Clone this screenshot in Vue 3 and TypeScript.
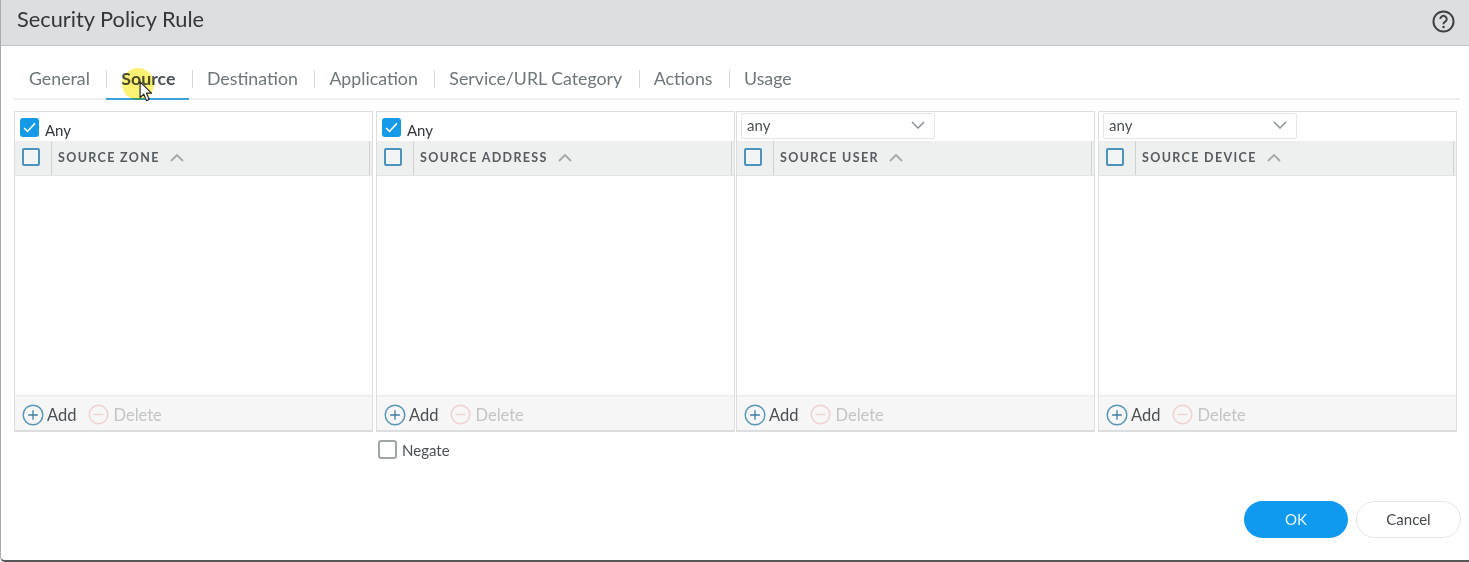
<script setup lang="ts">
interface Panel {
  title: string
  mode: 'check' | 'select'
}
const tabs: string[] = ['General', 'Source', 'Destination', 'Application', 'Service/URL Category', 'Actions', 'Usage']
const panels: Panel[] = [
  { title: 'SOURCE ZONE', mode: 'check' },
  { title: 'SOURCE ADDRESS', mode: 'check' },
  { title: 'SOURCE USER', mode: 'select' },
  { title: 'SOURCE DEVICE', mode: 'select' },
]
</script>

<template>
  <div class="dialog">
    <header class="head">
      <h1 class="title">Security Policy Rule</h1>
      <svg class="help" width="23" height="23" viewBox="0 0 22 22">
        <circle cx="11" cy="11" r="9.6" fill="none" stroke="#3c4246" stroke-width="1.9" />
        <path d="M7.9 8.6a3.1 3 0 1 1 4.7 2.6c-1 .6-1.6 1.1-1.6 2.4" fill="none" stroke="#3c4246" stroke-width="1.9" />
        <circle cx="11" cy="16.2" r="1.2" fill="#3c4246" />
      </svg>
    </header>

    <nav class="tabs">
      <div v-for="(t, i) in tabs" :key="t" class="tab" :class="{ active: i === 1, first: i === 0 }">{{ t }}</div>
      <div class="spot"></div>
      <svg class="cursor" width="15" height="22" viewBox="0 0 16 24">
        <path d="M1 1v17l4-3.6 3 7 3-1.3-3-6.8h5.4z" fill="#fff" stroke="#23272a" stroke-width="1.3" stroke-linejoin="round" />
      </svg>
    </nav>

    <section class="panels">
      <div v-for="p in panels" :key="p.title" class="panel">
        <div class="top" :class="{ 'top-select': p.mode === 'select' }">
          <template v-if="p.mode === 'check'">
            <span class="tick">
              <svg width="13" height="11" viewBox="0 0 12 10"><path d="M1 5.4l3.2 3.2L11 1.2" fill="none" stroke="#fff" stroke-width="1.4" /></svg>
            </span>
            <span class="any">Any</span>
          </template>
          <div v-else class="select">
            <span>any</span>
            <svg width="14" height="8" viewBox="0 0 14 8"><path d="M1 1l6 6 6-6" fill="none" stroke="#8b9296" stroke-width="1.5" /></svg>
          </div>
        </div>
        <div class="columns">
          <div class="cellcheck"><span class="box"></span></div>
          <div class="coltitle">
            <span>{{ p.title }}</span>
            <svg width="14" height="8" viewBox="0 0 14 8"><path d="M1 7l6-6 6 6" fill="none" stroke="#a3a8aa" stroke-width="1.8" /></svg>
          </div>
        </div>
        <div class="body"></div>
        <div class="foot">
          <span class="action add">
            <svg width="22" height="22" viewBox="0 0 22 22">
              <circle cx="11" cy="11" r="9.8" fill="none" stroke="#5b96b5" stroke-width="1.5" />
              <path d="M11 6.2v9.6M6.2 11h9.6" stroke="#3f7fa3" stroke-width="1.3" />
            </svg>
            Add
          </span>
          <span class="action del">
            <svg width="21" height="21" viewBox="0 0 21 21">
              <circle cx="10.5" cy="10.5" r="9.3" fill="none" stroke="#efcfd0" stroke-width="1.4" />
              <path d="M5.5 10.5h10" stroke="#efcfd0" stroke-width="1.3" />
            </svg>
            Delete
          </span>
        </div>
      </div>
    </section>

    <div class="negate-row">
      <label class="negate"><span class="plain"></span>Negate</label>
    </div>

    <footer class="buttons">
      <button class="ok" type="button">OK</button>
      <button class="cancel" type="button">Cancel</button>
    </footer>
  </div>
</template>

<style>
html, body { margin: 0; background: #fff; }
</style>

<style scoped>
.dialog {
  position: relative;
  box-sizing: border-box;
  width: 1469px;
  height: 562px;
  overflow: hidden;
  background: #fff;
  border-left: 1px solid #a9acae;
  border-bottom: 2px solid #55585a;
  border-bottom-left-radius: 5px;
  font-family: Lato, "Open Sans", sans-serif;
  color: #3c4246;
}
.head {
  display: flex;
  align-items: center;
  justify-content: space-between;
  box-sizing: border-box;
  height: 46px;
  padding: 0 14px 8px 16px;
  background: #dcdee0;
  border-bottom: 1px solid #c3c5c7;
}
.title {
  margin: 0;
  font-size: 21.8px;
  font-weight: 400;
  color: #32373a;
}
.help { margin-top: 5px; }
.tabs {
  position: relative;
  display: flex;
  align-items: stretch;
  box-sizing: border-box;
  width: 1446px;
  height: 54px;
  margin-left: 13px;
  padding-top: 16px;
  border-bottom: 2px solid #eceeef;
}
.tab {
  position: relative;
  box-sizing: border-box;
  padding: 3px 16.5px 0 15px;
  height: 38px;
  font-size: 17.75px;
  line-height: 26px;
  color: #6e7679;
  white-space: nowrap;
}
.tab::before {
  content: "";
  position: absolute;
  left: 0;
  top: 8px;
  height: 18px;
  width: 1px;
  background: #d6d8d9;
}
.tab.first { padding-left: 15px; }
.tab.first::before { display: none; }
.tab.active {
  color: #4a5154;
  font-weight: 700;
}
.tab.active::after {
  content: "";
  position: absolute;
  left: 0;
  right: 3px;
  bottom: 0;
  height: 2px;
  background: #3ba3dc;
}
.spot {
  position: absolute;
  left: 108px;
  top: 22px;
  width: 32px;
  height: 32px;
  border-radius: 50%;
  background: #faec46;
  opacity: 0.75;
  mix-blend-mode: multiply;
}
.cursor {
  position: absolute;
  left: 125px;
  top: 35px;
}
.panels {
  display: grid;
  grid-template-columns: 362px 360px 362px 359px;
  box-sizing: border-box;
  width: 1443px;
  margin: 11px 0 0 13px;
}
.panel {
  display: flex;
  flex-direction: column;
  box-sizing: border-box;
  width: 359px;
  height: 321px;
  border: 1px solid #dcdddf;
  border-bottom: 2px solid #dcdddf;
}
.top {
  display: flex;
  align-items: center;
  gap: 6px;
  box-sizing: border-box;
  height: 29px;
  padding: 2px 0 0 5px;
}
.top-select { padding: 1px 0 0 4px; align-items: flex-start; }
.tick {
  display: flex;
  align-items: center;
  justify-content: center;
  width: 19px;
  height: 19px;
  border-radius: 3px;
  background: #149ae6;
}
.any {
  font-size: 15px;
  margin-top: 5px;
  color: #33383b;
}
.select {
  display: flex;
  align-items: center;
  justify-content: space-between;
  box-sizing: border-box;
  width: 194px;
  height: 26px;
  padding: 0 9px 3px 5px;
  border: 1px solid #e4e5e6;
  border-radius: 2px;
  font-size: 15px;
  color: #4c5255;
}
.columns {
  display: flex;
  align-items: stretch;
  box-sizing: border-box;
  height: 35px;
  padding-right: 2px;
  background: #eeefef;
  border-bottom: 1px solid #e2e3e4;
}
.cellcheck {
  display: flex;
  align-items: center;
  justify-content: center;
  box-sizing: border-box;
  width: 37px;
  padding: 0 4px 3px 0;
  flex: none;
  border-right: 1px solid #cfd1d2;
}
.box {
  box-sizing: border-box;
  width: 18px;
  height: 18px;
  border: 2px solid #4c93bd;
  border-radius: 2px;
  background: #f2f4f5;
}
.coltitle {
  display: flex;
  flex: 1;
  align-items: center;
  gap: 10px;
  padding: 0 0 1px 6px;
  font-size: 12.5px;
  font-weight: 700;
  letter-spacing: 1.35px;
  color: #555b5f;
  border-right: 1px solid #cfd1d2;
}
.body { flex: 1; }
.foot {
  display: flex;
  align-items: center;
  gap: 12px;
  box-sizing: border-box;
  height: 35px;
  padding: 3px 0 0 7px;
  background: #f6f6f6;
  border-top: 1px solid #e9eaea;
}
.action {
  display: inline-flex;
  align-items: center;
  gap: 3px;
  font-size: 16.5px;
}
.add { color: #494f52; }
.del { color: #c2c5c6; gap: 4px; }
.negate-row {
  box-sizing: border-box;
  height: 36px;
  padding: 8px 0 0 377px;
}
.negate {
  display: inline-flex;
  align-items: center;
  gap: 5px;
  font-size: 15px;
  color: #4b5154;
}
.plain {
  box-sizing: border-box;
  width: 19px;
  height: 19px;
  border: 2px solid #a0a5a8;
  border-radius: 3px;
  background: #fff;
}
.buttons {
  display: flex;
  justify-content: flex-end;
  gap: 8px;
  padding: 33px 8px 0 0;
}
button {
  box-sizing: border-box;
  width: 104px;
  height: 37px;
  border-radius: 19px;
  font-family: inherit;
  font-size: 15px;
  padding: 0 0 2px;
}
.ok {
  background: #0f9af0;
  border: none;
  color: #e9f6fe;
}
.cancel {
  width: 105px;
  background: #fff;
  border: 1px solid #e3e5e6;
  color: #43494c;
}
</style>
